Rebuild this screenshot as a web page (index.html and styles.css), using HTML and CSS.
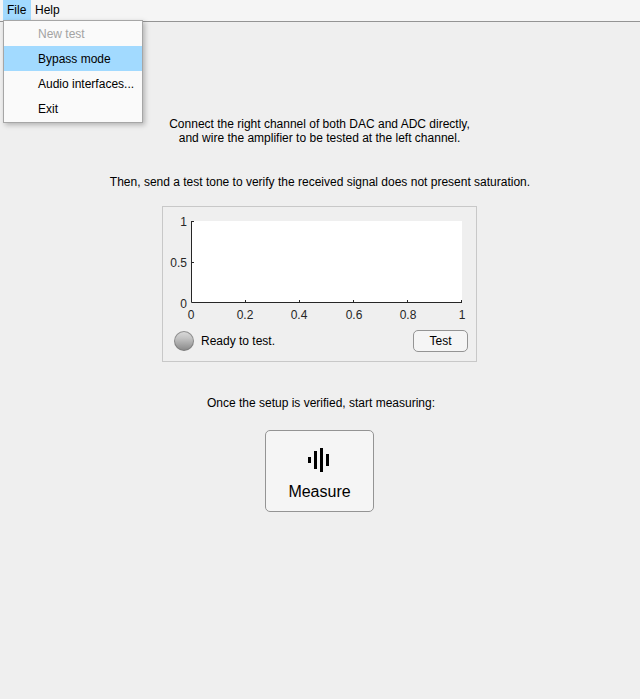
FILE: index.html
```html
<!DOCTYPE html>
<html lang="en">
<head>
<meta charset="utf-8">
<title>Amplifier test</title>
<link rel="stylesheet" href="styles.css">
</head>
<body>
<nav class="menubar">
  <div class="menu open">File
    <ul class="dropdown">
      <li class="disabled">New test</li>
      <li class="active">Bypass mode</li>
      <li>Audio interfaces...</li>
      <li>Exit</li>
    </ul>
  </div>
  <div class="menu">Help</div>
</nav>
<main class="content">
  <p class="connect">Connect the right channel of both DAC and ADC directly,<br>and wire the amplifier to be tested at the left channel.</p>
  <p class="tone">Then, send a test tone to verify the received signal does not present saturation.</p>
  <section class="panel">
    <svg class="plot" width="313" height="118" viewBox="163 207 313 118">
      <rect x="191" y="221" width="271" height="82" fill="#fff"/>
      <path d="M191.5 221V302.5H462M191 221.5H194M191 262.5H194M245.5 302V300M299.5 302V300M353.5 302V300M407.5 302V300M461.5 302V300" fill="none" stroke="#262626"/>
      <g text-anchor="end">
        <text x="187" y="226">1</text>
        <text x="187" y="267">0.5</text>
        <text x="187" y="308">0</text>
      </g>
      <g text-anchor="middle">
        <text x="191" y="319">0</text>
        <text x="245" y="319">0.2</text>
        <text x="299" y="319">0.4</text>
        <text x="354" y="319">0.6</text>
        <text x="408" y="319">0.8</text>
        <text x="462" y="319">1</text>
      </g>
    </svg>
    <div class="status">
      <span class="lamp"></span>
      <span class="message">Ready to test.</span>
      <button class="test">Test</button>
    </div>
  </section>
  <p class="ready">Once the setup is verified, start measuring:</p>
  <button class="measure">
    <svg width="21" height="24" viewBox="0 0 21 24">
      <path d="M0 9h3v6H0zM6 3h3v18H6zM12 0h3v24h-3zM18 6h3v12h-3z"/>
    </svg>
    <span>Measure</span>
  </button>
</main>
</body>
</html>
```
FILE: styles.css
```css
* { box-sizing: border-box; }
body {
  margin: 0;
  height: 699px;
  overflow: hidden;
  background: #efefef;
  color: #000;
  font: 12px/14px "Liberation Sans", Arial, sans-serif;
}
p { margin: 0; }
button {
  padding: 0;
  border: 1px solid #949494;
  background: #f5f5f5;
  color: #000;
  font: inherit;
}
.menubar {
  display: flex;
  height: 22px;
  padding-left: 3px;
  background: #f5f5f5;
  border-bottom: 1px solid #949494;
}
.menu {
  position: relative;
  height: 20px;
  padding: 0 4px;
  line-height: 20px;
}
.menu.open { width: 28px; background: #a2daff; }
.dropdown {
  position: absolute;
  top: 20px;
  left: 0;
  width: 140px;
  height: 103px;
  margin: 0;
  padding: 0;
  list-style: none;
  background: #fafafa;
  border: 1px solid #a6a6a6;
  box-shadow: 2px 2px 5px rgba(0, 0, 0, .25);
}
.dropdown li {
  height: 25px;
  padding-left: 34px;
  line-height: 26px;
  white-space: nowrap;
}
.dropdown .active { background: #a2daff; }
.dropdown .disabled { color: #a3a3a3; }
.content {
  display: flex;
  flex-direction: column;
  align-items: center;
  padding-top: 95px;
  text-align: center;
}
.connect { margin-right: 1px; }
.tone { margin-top: 30px; }
.panel {
  width: 315px;
  height: 156px;
  margin: 17px 1px 0 0;
  border: 1px solid #c8c8c8;
}
.plot {
  display: block;
  fill: #262626;
}
.status {
  display: flex;
  align-items: center;
  height: 22px;
  margin-top: 5px;
  padding: 0 8px 0 11px;
}
.lamp {
  width: 20px;
  height: 20px;
  border: 1.5px solid rgba(120, 120, 120, .75);
  border-radius: 50%;
  background: linear-gradient(#dcdcdc, #c4c4c4 35%, #858585) border-box;
}
.message { margin-left: 7px; }
.test {
  width: 55px;
  height: 22px;
  margin-left: auto;
  border-radius: 5px;
}
.ready { margin: 34px 0 0 2px; }
.measure {
  display: flex;
  flex-direction: column;
  align-items: center;
  width: 109px;
  height: 82px;
  margin: 20px 1px 0 0;
  padding: 17px 0 0;
  border-radius: 5px;
  font-size: 16px;
  line-height: 18px;
}
.measure svg { margin-right: 2px; }
.measure span { margin-top: 11px; }
```
